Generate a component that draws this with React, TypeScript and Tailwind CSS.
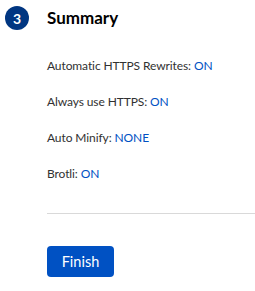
export default function App() {
    // ===================================================
    // SUMMARY ROWS
    // ===================================================

    const rows = [
        { label: "Automatic HTTPS Rewrites", value: "ON" },
        { label: "Always use HTTPS", value: "ON" },
        { label: "Auto Minify", value: "NONE" },
        { label: "Brotli", value: "ON" },
    ];

    return (
        <div
            className="w-[255px] h-[291px] bg-white flex text-[#313131]"
            style={{ fontFamily: 'Lato, "Open Sans", sans-serif' }}
        >
            {/* STEP BADGE */}
            <div className="ml-[5px] mt-[6px] w-6 h-6 rounded-full bg-[#003681] text-white text-[14px] font-bold flex items-center justify-center shrink-0">
                3
            </div>

            {/* CONTENT */}
            <div className="ml-[18px] flex-1 flex flex-col">
                <h1 className="mt-[6px] text-[17px] leading-6 font-bold text-black">
                    Summary
                </h1>

                <div className="mt-[26px] flex flex-col gap-4">
                    {rows.map((row) => (
                        <div key={row.label} className="text-[12px] leading-5 tracking-[-0.1px]">
                            {row.label}:{" "}
                            <span className="text-[#0051c3]">{row.value}</span>
                        </div>
                    ))}
                </div>

                <div className="mt-[29px] h-px bg-[#d9d9d9]" />

                <div className="mt-[32px]">
                    <button className="h-[31px] w-[67px] rounded-[4px] bg-[#0051c3] text-white text-[14.5px]">
                        Finish
                    </button>
                </div>
            </div>
        </div>
    );
}
